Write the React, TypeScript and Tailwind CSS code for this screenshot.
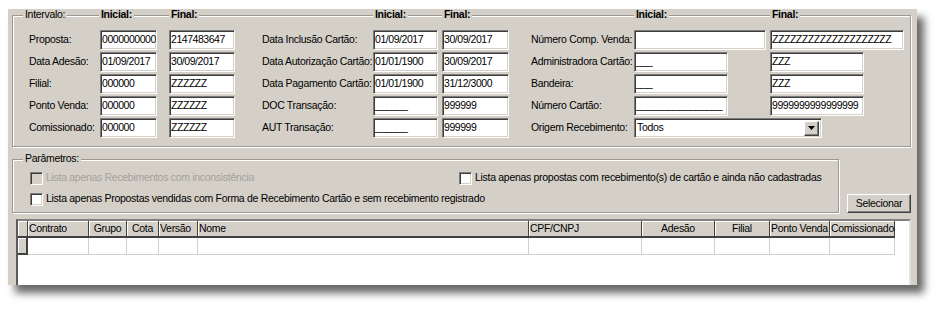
import type { ReactNode } from "react";

type Row = {
  l1: string;
  a: string;
  b: string;
  l2: string;
  c: string;
  d: string;
  l3: string;
  e?: string;
  f?: string;
  wide?: boolean;
  select?: boolean;
};

const rows: Row[] = [
  { l1: "Proposta:", a: "0000000000", b: "2147483647", l2: "Data Inclusão Cartão:", c: "01/09/2017", d: "30/09/2017", l3: "Número Comp. Venda:", e: "", f: "ZZZZZZZZZZZZZZZZZZZZ", wide: true },
  { l1: "Data Adesão:", a: "01/09/2017", b: "30/09/2017", l2: "Data Autorização Cartão:", c: "01/01/1900", d: "30/09/2017", l3: "Administradora Cartão:", e: "___", f: "ZZZ" },
  { l1: "Filial:", a: "000000", b: "ZZZZZZ", l2: "Data Pagamento Cartão:", c: "01/01/1900", d: "31/12/3000", l3: "Bandeira:", e: "___", f: "ZZZ" },
  { l1: "Ponto Venda:", a: "000000", b: "ZZZZZZ", l2: "DOC Transação:", c: "______", d: "999999", l3: "Número Cartão:", e: "________________", f: "9999999999999999" },
  { l1: "Comissionado:", a: "000000", b: "ZZZZZZ", l2: "AUT Transação:", c: "______", d: "999999", l3: "Origem Recebimento:", select: true },
];

const columns = [
  { name: "Contrato", w: "w-[61px]", align: "justify-start" },
  { name: "Grupo", w: "w-[38px]", align: "justify-center" },
  { name: "Cota", w: "w-[32px]", align: "justify-center" },
  { name: "Versão", w: "w-[39px]", align: "justify-start" },
  { name: "Nome", w: "w-[331px]", align: "justify-start" },
  { name: "CPF/CNPJ", w: "w-[113px]", align: "justify-start" },
  { name: "Adesão", w: "w-[73px]", align: "justify-center" },
  { name: "Filial", w: "w-[55px]", align: "justify-center" },
  { name: "Ponto Venda", w: "w-[60px]", align: "justify-start" },
  { name: "Comissionado", w: "w-[65px]", align: "justify-start" },
];

const sunken =
  "border border-t-[#7c7c7c] border-l-[#7c7c7c] border-r-white border-b-white shadow-[inset_1px_1px_0_#3c3c3c,inset_-1px_-1px_0_#d4d0c8]";

const Field = ({ w, value = "" }: { w: string; value?: string }) => (
  <div className={`${w} h-[20px] shrink-0 bg-white ${sunken} flex items-center pl-[1px] overflow-hidden whitespace-nowrap tracking-[-0.45px]`}>
    {value}
  </div>
);

const Check = ({ disabled }: { disabled?: boolean }) => (
  <span className={`w-[13px] h-[13px] shrink-0 ${sunken} ${disabled ? "bg-[#d4d0c8]" : "bg-white"}`} />
);

// etched group box, legend texts sit on the top line
const Group = ({ className, children }: { className: string; children: ReactNode }) => (
  <div className={`border border-[#9b9891] shadow-[inset_1px_1px_0_white,1px_1px_0_white] ${className}`}>
    {children}
  </div>
);

const Legend = ({ w, children, bold }: { w: string; children: string; bold?: boolean }) => (
  <div className={`${w} shrink-0`}>
    <span className={`bg-[#d4d0c8] px-[2px] ${bold ? "font-bold" : ""}`}>{children}</span>
  </div>
);

export default function App() {
  return (
    <div className="w-[937px] h-[331px] bg-white pt-[9px] pl-[8px] font-['Liberation_Sans',Arial,sans-serif] text-[10.5px] tracking-[-0.3px] text-black">
      <div className="w-[909px] h-[276px] bg-[#d4d0c8] overflow-hidden shadow-[7px_8px_8px_rgba(0,0,0,0.6)] pt-[6px] pl-[4px] pr-[6px]">
        <Group className="h-[132px]">
          <div className="flex h-[14px] -mt-[8px] items-center pl-[10px]">
            <Legend w="w-[76px]">Intervalo:</Legend>
            <Legend w="w-[70px]" bold>Inicial:</Legend>
            <Legend w="w-[204px]" bold>Final:</Legend>
            <Legend w="w-[69px]" bold>Inicial:</Legend>
            <Legend w="w-[192px]" bold>Final:</Legend>
            <Legend w="w-[136px]" bold>Inicial:</Legend>
            <Legend w="w-[80px]" bold>Final:</Legend>
          </div>

          <div className="flex flex-col gap-[2px] mt-[8px]">
            {rows.map((r) => (
              <div key={r.l1} className="flex items-center h-[20px] whitespace-nowrap">
                <span className="ml-[16px] w-[71px] shrink-0">{r.l1}</span>
                <Field w="w-[57px]" value={r.a} />
                <div className="w-[12px] shrink-0" />
                <Field w="w-[66px]" value={r.b} />
                <span className="ml-[27px] w-[111px] shrink-0">{r.l2}</span>
                <Field w="w-[65px]" value={r.c} />
                <div className="w-[4px] shrink-0" />
                <Field w="w-[67px]" value={r.d} />
                <span className="ml-[22px] w-[103px] shrink-0">{r.l3}</span>
                {r.select ? (
                  <div className={`w-[188px] h-[20px] shrink-0 bg-white ${sunken} flex items-center pl-[2px] pr-[2px]`}>
                    <span className="flex-1">Todos</span>
                    <span className="w-[15px] h-[15px] bg-[#d4d0c8] border border-t-white border-l-white border-r-[#404040] border-b-[#404040] shadow-[inset_-1px_-1px_0_#808080] flex items-center justify-center">
                      <svg width="7" height="4" viewBox="0 0 7 4">
                        <path d="M0 0h7L3.5 4z" fill="#000" />
                      </svg>
                    </span>
                  </div>
                ) : (
                  <>
                    <div className="w-[136px] shrink-0">
                      <Field w={r.wide ? "w-[132px]" : "w-[94px]"} value={r.e} />
                    </div>
                    <Field w={r.wide ? "w-[134px]" : "w-[94px]"} value={r.f} />
                  </>
                )}
              </div>
            ))}
          </div>
        </Group>

        <div className="flex items-end mt-[12px]">
          <Group className="w-[827px] h-[54px] shrink-0">
            <div className="flex h-[14px] -mt-[8px] items-center pl-[10px]">
              <Legend w="w-[80px]">Parâmetros:</Legend>
            </div>
            <div className="flex items-center h-[14px] mt-[5px] whitespace-nowrap">
              <div className="w-[429px] ml-[17px] flex items-center gap-[3px] shrink-0">
                <Check disabled />
                <span className="text-[#a4a19a]">Lista apenas Recebimentos com inconsistência</span>
              </div>
              <div className="flex items-center gap-[3px]">
                <Check />
                <span>Lista apenas propostas com recebimento(s) de cartão e ainda não cadastradas</span>
              </div>
            </div>
            <div className="flex items-center h-[14px] mt-[7px] ml-[17px] gap-[3px] whitespace-nowrap">
              <Check />
              <span>Lista apenas Propostas vendidas com Forma de Recebimento Cartão e sem recebimento registrado</span>
            </div>
          </Group>
          <button className="ml-[8px] w-[64px] h-[19px] bg-[#d4d0c8] border border-t-white border-l-white border-r-[#404040] border-b-[#404040] shadow-[inset_-1px_-1px_0_#808080] flex items-center justify-center">
            Selecionar
          </button>
        </div>

        <div className="mt-[6px] ml-[4px] h-[100px] bg-white border-2 border-t-[#808080] border-l-[#5a5a5a] border-r-[#e4e2dc] border-b-[#e4e2dc]">
          <div className="flex h-[17px] whitespace-nowrap">
            <div className="w-[10px] shrink-0 bg-[#d4d0c8] border-r border-b-2 border-[#404040] shadow-[inset_1px_1px_0_white]" />
            {columns.map((c) => (
              <div
                key={c.name}
                className={`${c.w} shrink-0 bg-[#d4d0c8] border-r border-b-2 border-[#404040] shadow-[inset_1px_1px_0_white] flex items-center px-[1px] ${c.align}`}
              >
                {c.name}
              </div>
            ))}
          </div>
          <div className="flex h-[17px]">
            <div className="w-[10px] shrink-0 bg-[#d4d0c8] border-r-2 border-b-2 border-[#404040] shadow-[inset_1px_1px_0_white]" />
            {columns.map((c) => (
              <div key={c.name} className={`${c.w} shrink-0 border-r border-b border-[#cfcfcf]`} />
            ))}
          </div>
        </div>
      </div>
    </div>
  );
}
